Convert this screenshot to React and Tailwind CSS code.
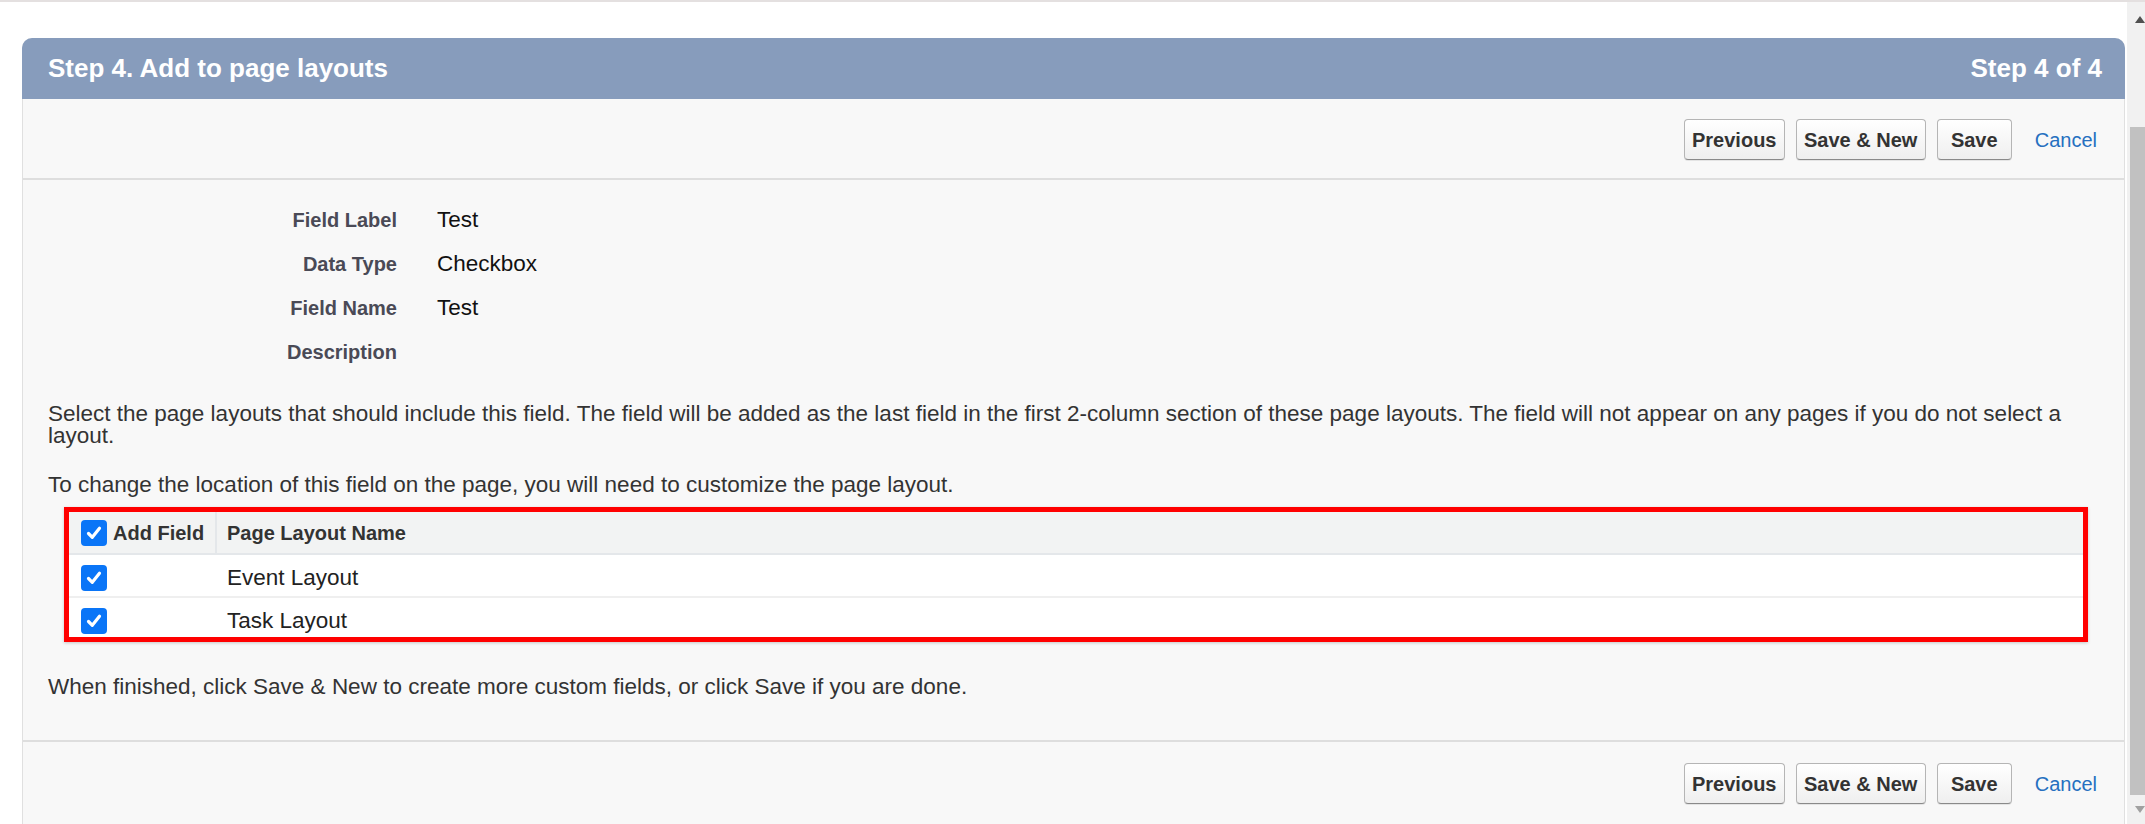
import React from "react"

const font = { fontFamily: '"Liberation Sans", Arial, sans-serif' }

function CheckBox() {
  return (
    <span className="flex h-[26px] w-[26px] shrink-0 items-center justify-center rounded-[4px] bg-[#0a75f7]">
      <svg width="18" height="18" viewBox="0 0 18 18" fill="none">
        <path d="M3.5 9.5 L7.3 13.3 L14.5 4.3" stroke="white" strokeWidth="3.2" strokeLinecap="round" strokeLinejoin="round" />
      </svg>
    </span>
  )
}

function Btn({ w, children }) {
  return (
    <button
      className={`${w} h-[41px] rounded-[4px] border border-[#b5b5b5] border-b-[#8a8a8a] bg-gradient-to-b from-white to-[#efefef] text-[20px] font-bold text-[#333] shadow-[0_1px_0_rgba(0,0,0,0.08)]`}
    >
      {children}
    </button>
  )
}

function ButtonBar() {
  return (
    <div className="flex items-center justify-end gap-[11px] pr-[27px]">
      <Btn w="w-[101px]">Previous</Btn>
      <Btn w="w-[130px]">Save &amp; New</Btn>
      <Btn w="w-[75px]">Save</Btn>
      <a className="ml-[12px] text-[20px] text-[#2670c0]">Cancel</a>
    </div>
  )
}

const fields = [
  ["Field Label", "Test"],
  ["Data Type", "Checkbox"],
  ["Field Name", "Test"],
  ["Description", ""],
]

export default function App() {
  return (
    <div className="flex h-[824px] w-[2145px] flex-col overflow-hidden bg-white" style={font}>
      <div className="h-[2px] bg-[#e4e0e0]" />
      <div className="flex min-h-0 flex-1">
        <main className="flex-1 overflow-hidden pl-[22px] pr-[2px] pt-[36px]">
          <section className="rounded-t-[10px] border-x border-[#e0e0e0] bg-[#f8f8f8]">
            {/* header */}
            <div className="-mx-px flex h-[61px] items-center justify-between rounded-t-[10px] bg-[#879cbc] pl-[26px] pr-[23px] text-[26px] font-bold text-white">
              <h1>Step 4. Add to page layouts</h1>
              <span>Step 4 of 4</span>
            </div>

            <div className="border-b-2 border-[#dedede] pb-[18px] pt-[20px]">
              <ButtonBar />
            </div>

            <div className="pt-[18px]">
              {fields.map(([label, value]) => (
                <div key={label} className="flex h-[44px] items-center gap-[40px]">
                  <span className="w-[374px] text-right text-[20px] font-bold text-[#4a4a56]">{label}</span>
                  <span className="text-[22.5px] text-[#111]">{value}</span>
                </div>
              ))}
            </div>

            <div className="pl-[25px] pr-[25px] text-[22.5px] leading-[22px] text-[#333]">
              <p className="mt-[29px]">
                Select the page layouts that should include this field. The field will be added as the last field in the first 2-column section of these page layouts. The field will not appear on any pages if you do not select a layout.
              </p>
              <p className="mt-[27px]">
                To change the location of this field on the page, you will need to customize the page layout.
              </p>
            </div>

            <div className="ml-[41px] mr-[36px] mt-[11px] border-[5px] border-[#ff0000] shadow-[0_1px_3px_rgba(0,0,0,0.2)]">
              <div className="flex h-[43px] border-b-2 border-[#e4e7ea] bg-[#f2f3f3] text-[20px] font-bold text-[#333]">
                <div className="flex w-[148px] items-center gap-[6px] border-r-2 border-[#e4e7ea] pl-[12px]">
                  <CheckBox />
                  <span>Add Field</span>
                </div>
                <div className="flex items-center pl-[10px]">Page Layout Name</div>
              </div>
              {["Event Layout", "Task Layout"].map((name, i) => (
                <div
                  key={name}
                  className={`flex items-start bg-white pt-[10px] text-[22.5px] text-[#222] ${i === 0 ? "h-[43px] border-b-2 border-[#efefef]" : "h-[39px]"}`}
                >
                  <div className="w-[148px] pl-[12px]">
                    <CheckBox />
                  </div>
                  <span className="pl-[10px] leading-[26px]">{name}</span>
                </div>
              ))}
            </div>

            <p className="pb-[42px] pl-[25px] pt-[34px] text-[22.5px] leading-[22px] text-[#333]">
              When finished, click Save &amp; New to create more custom fields, or click Save if you are done.
            </p>

            <div className="h-[100px] border-t-2 border-[#dedede] pt-[21px]">
              <ButtonBar />
            </div>
          </section>
        </main>

        {/* scrollbar */}
        <div className="flex w-[18px] flex-col bg-[#f1f1f1]">
          <div className="flex h-[34px] items-center justify-end">
            <svg width="10" height="7" viewBox="0 0 10 7">
              <polygon points="5,0 10,7 0,7" fill="#505050" />
            </svg>
          </div>
          <div className="h-[91px]" />
          <div className="ml-[3px] h-[668px] bg-[#c1c1c1]" />
          <div className="flex flex-1 items-center justify-end">
            <svg width="10" height="7" viewBox="0 0 10 7">
              <polygon points="0,0 10,0 5,7" fill="#a0a0a0" />
            </svg>
          </div>
        </div>
      </div>
    </div>
  )
}
